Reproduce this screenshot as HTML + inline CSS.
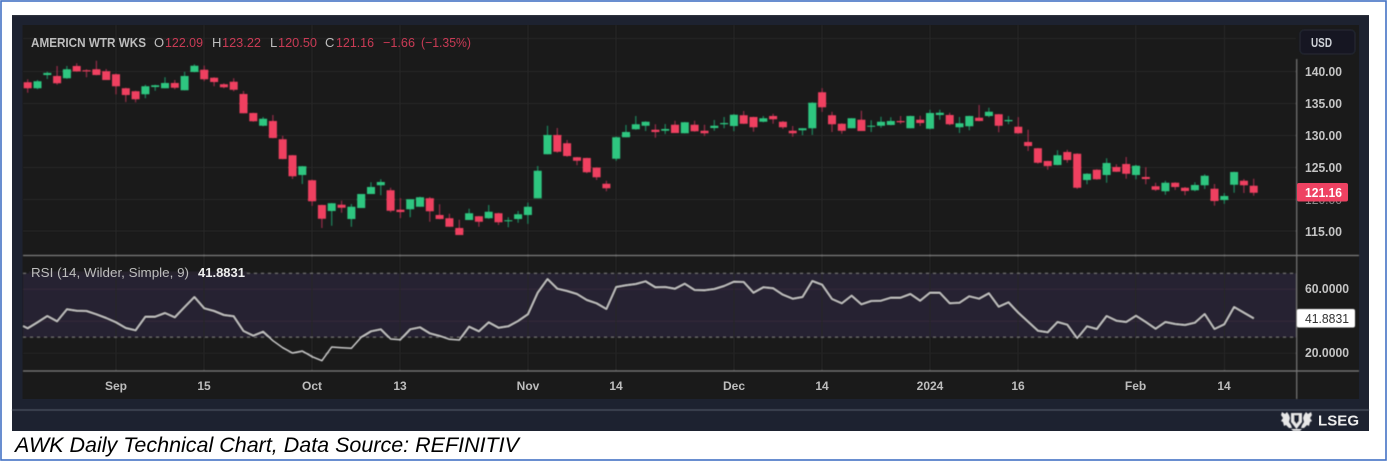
<!DOCTYPE html>
<html>
<head>
<meta charset="utf-8">
<title>AWK Daily Technical Chart</title>
<style>
html,body{margin:0;padding:0;background:#fff;width:1388px;height:462px;overflow:hidden}
svg{display:block}
text{font-family:"Liberation Sans",sans-serif}
</style>
</head>
<body>
<svg width="1388" height="462" viewBox="0 0 1388 462" xmlns="http://www.w3.org/2000/svg">
<defs>
<filter id="b" x="-2%" y="-2%" width="104%" height="104%"><feGaussianBlur stdDeviation="0.4"/></filter>
<filter id="t" x="-5%" y="-20%" width="110%" height="140%"><feGaussianBlur stdDeviation="0.35"/></filter>
</defs>
<rect width="1388" height="462" fill="#fff"/>
<rect x="1" y="1" width="1385" height="459" fill="none" stroke="#4472c4" stroke-width="1.6"/>

<rect x="12" y="15" width="1357" height="416" fill="#1d2230"/>
<rect x="12" y="15" width="1357" height="1.2" fill="#2c313c"/>
<rect x="22.5" y="25" width="1336.5" height="374" fill="#1a1a1a"/>

<g filter="url(#b)">
<rect x="23" y="273.3" width="1273.5" height="64" fill="#282230"/>
<path d="M23 38.5H1296M23 71.5H1296M23 103.5H1296M23 135.5H1296M23 167.5H1296M23 199.5H1296M23 231H1296" stroke="#262626" fill="none"/>
<path d="M23 289.2H1296M23 321.3H1296" stroke="#352f3d" fill="none"/>
<path d="M23 353.3H1296" stroke="#262626" fill="none"/>
<path d="M116 25V371M204 25V371M312 25V371M400 25V371M528 25V371M616 25V371M734 25V371M822 25V371M930 25V371M1018 25V371M1135.6 25V371M1224.5 25V371" stroke="#282828" fill="none"/>
<path d="M23 273.3H1296M23 337.3H1296" stroke="#7a7a7a" stroke-dasharray="3 4" fill="none"/>
<path d="M23 255.5H1359M23 371H1359" stroke="#7d7d7d" stroke-width="1.2" fill="none"/>
<path d="M1296.7 59V399" stroke="#777" stroke-width="1.2" fill="none"/>
<path d="M12 410H1369" stroke="#59606e" fill="none"/>

<path fill="none" stroke="#1f7d58" stroke-width="1.3" d="M37.5 80V89.3M47.3 71.7V79M66.9 66V78.7M145.4 84.7V98.3M155.2 84.7V90.7M165 77.3V88.3M184.6 72V90.3M194.4 64.3V72.3M263.1 117V126.3M302.3 166V184M331.7 203V225.7M351.4 204V226.7M361.2 194V208M371 182.3V194M380.8 179.3V195.3M410.2 199.3V217.3M420 196.7V206.7M469.1 208.7V220M488.7 205V218.7M508.3 217.3V227.3M518.1 211V222.7M527.9 202.7V223.7M537.7 166V198.3M547.5 125.7V154.3M616.2 136.7V160.7M626 125V137.3M635.8 116V129.7M645.6 121.3V131M665.2 124V134M684.8 122V133.3M714.3 120V130.7M724.1 117V128.3M733.9 114.3V131M763.3 116V122.3M802.5 128.3V135M812.3 102.3V134.7M851.6 118.3V128.3M871.2 120.3V132M881 116.7V127.7M890.8 117.3V125.3M910.4 115.7V128.3M930 110V128.7M939.8 109.7V119.7M959.5 117V133M969.3 115.7V130.3M988.9 107.7V117.3M1008.5 116V124.3M1057.5 150.3V165.3M1087 173.3V184.3M1106.6 158.3V182.7M1136 165V179.3M1165.4 180.7V194.7M1194.9 182.3V191.3M1204.7 174.3V189M1224.3 193.3V203.7M1234.1 171.7V192.7"/>
<path fill="none" stroke="#8c2c44" stroke-width="1.3" d="M27.7 79.3V92.7M57.1 66V84.7M76.7 63.3V71.7M86.5 69.3V77.3M96.4 60.7V75.3M106.2 69V80M116 74V94.3M125.8 87.7V102M135.6 90.7V102.3M174.8 80V89.3M204.2 65.7V81M214.1 77.3V86.3M223.9 83.3V88.3M233.7 78.3V91.3M243.5 91V113.3M253.3 112.7V121.7M272.9 115V138.3M282.7 136V159.3M292.5 155V179M312.1 180V205.7M321.9 204.7V228M341.6 200.7V212.7M390.6 187.7V212.3M400.4 198.3V218M429.8 197V221.7M439.6 204.3V219.3M449.4 213.7V226.7M459.3 219.7V235M478.9 216V226.7M498.5 212.7V225M557.3 128V152.7M567.1 140V156.7M577 157V165.3M586.8 157.7V173.3M596.6 167.3V180M606.4 180.7V191.3M655.4 124.3V137.7M675 120.7V133M694.6 120.7V131.7M704.5 124.7V136M743.7 111V124M753.5 116.7V131.7M773.1 113.7V123.7M782.9 121V129M792.7 126V136.7M822.1 88.3V111.7M832 111.7V132M841.8 123.3V133.7M861.4 110.7V131M900.6 116V124M920.2 115.7V126M949.7 112.7V125.3M979.1 105V121.3M998.7 114V132.3M1018.3 117.3V133.3M1028.1 129.7V151M1037.9 148V163.7M1047.7 160.7V169.7M1067.3 149.7V162.7M1077.2 153.3V189M1096.8 169.3V179.7M1116.4 164.3V172M1126.2 157V178.7M1145.8 167.3V184.3M1155.6 182.7V191M1175.2 182.3V190M1185 187V195.3M1214.5 184V205.7M1243.9 179V193M1253.7 178.7V195.7"/>
<path fill="none" stroke="#2dc680" stroke-width="8" d="M37.5 81.3V88.3M47.3 73V75M66.9 69.3V78.3M145.4 86.3V94.3M155.2 85.3V87M165 83V88.3M184.6 76V90.3M194.4 65.7V72M263.1 118.7V125.7M302.3 166.3V175M331.7 203.3V211M351.4 206.7V219M361.2 194V208M371 187V194M380.8 182V185.3M410.2 199.3V209.3M420 197.3V206.7M469.1 213.3V220M488.7 211.7V218.3M508.3 220.3V221.3M518.1 214.3V219M527.9 206.7V215M537.7 170.7V198.3M547.5 135V154.3M616.2 137.3V158.7M626 132V137.3M635.8 124.3V129.3M645.6 121.7V125.7M665.2 129V130.7M684.8 122.3V133.3M714.3 125.7V128M724.1 123V124.3M733.9 114.7V126M763.3 118.3V121.7M802.5 128.3V130.3M812.3 102.7V128.3M851.6 118.3V128.3M871.2 125.7V126.7M881 121.7V125.7M890.8 121V125M910.4 116V128.3M930 113V128.7M939.8 112.7V115M959.5 123.3V127.3M969.3 116V126.3M988.9 111.7V116M1008.5 120V121.3M1057.5 155.3V165M1087 173.7V180M1106.6 163V175M1136 165.7V175M1165.4 182.7V191.3M1194.9 185V190.3M1204.7 175.7V185.3M1224.3 196V200M1234.1 172V184.7"/>
<path fill="none" stroke="#ef4161" stroke-width="8" d="M27.7 82.3V88.3M57.1 76V83.3M76.7 66V71.3M86.5 70.3V71.3M96.4 69.3V75M106.2 71.3V80M116 74.3V86.3M125.8 88.3V95M135.6 91.3V99.3M174.8 83V87.7M204.2 69.7V79.3M214.1 77.7V82M223.9 84.3V87.3M233.7 81.7V89.7M243.5 94V113.3M253.3 113V121.3M272.9 121V138M282.7 139.3V159M292.5 155.3V176.3M312.1 180.3V201.3M321.9 205V218.7M341.6 204.7V207.7M390.6 190.3V210.7M400.4 209.7V212M429.8 198.3V211.3M439.6 215V219M449.4 218.3V226.7M459.3 228V235M478.9 216.3V221.7M498.5 213.3V222.3M557.3 135V151.7M567.1 143.3V156M577 157.3V160.7M586.8 158V172.3M596.6 167.7V177.3M606.4 183.7V188.3M655.4 129.7V132M675 124.7V133M694.6 124.7V131.3M704.5 130.7V133.3M743.7 115.3V123.7M753.5 117V127.3M773.1 116V119.3M782.9 121.7V127.3M792.7 130.7V133.3M822.1 92.3V107.3M832 115.3V124.3M841.8 123.7V130.7M861.4 119.7V131M900.6 121V122.3M920.2 119.7V123M949.7 115V124.3M979.1 117.7V121M998.7 114.3V125.7M1018.3 126.7V133.3M1028.1 142V146M1037.9 148.3V162.7M1047.7 161V166M1067.3 152V160M1077.2 153.7V187.7M1096.8 169.7V179.3M1116.4 167V171.7M1126.2 164V173.7M1145.8 177V179M1155.6 186.3V189.7M1175.2 182.7V187M1185 187.7V191M1214.5 188.7V201M1243.9 180.7V185.3M1253.7 185.7V192.7"/>

<polyline fill="none" stroke="#c9c9c9" stroke-width="1.5" stroke-linejoin="round" points="23,326 27.7,328.3 37.5,322.3 47.3,316 57.1,321.3 66.9,309.3 76.7,310.7 86.5,311 96.4,314.3 106.2,318 116,322.3 125.8,328 135.6,330.3 145.4,316.7 155.2,316.7 165,313 174.8,317.3 184.6,307 194.4,297 204.2,308.3 214.1,311 223.9,315 233.7,316.3 243.5,331 253.3,335.7 263.1,331.7 272.9,340.7 282.7,347.7 292.5,353 302.3,351 312.1,356.7 321.9,360.7 331.7,347 341.6,347.7 351.4,348.3 361.2,337.3 371,331.3 380.8,329.3 390.6,339 400.4,339.7 410.2,329.3 420,327.3 429.8,333.3 439.6,336 449.4,339.3 459.3,340 469.1,326.7 478.9,331.3 488.7,322.3 498.5,327.7 508.3,326.3 518.1,321 527.9,314.3 537.7,292.7 547.5,279 557.3,288.7 567.1,291 577,294 586.8,300 596.6,303.3 606.4,309 616.2,287 626,285.3 635.8,284 645.6,281.3 655.4,287.3 665.2,287 675,288.7 684.8,283.7 694.6,290 704.5,290.3 714.3,289 724.1,286 733.9,281.7 743.7,282 753.5,292.7 763.3,287.3 773.1,288.3 782.9,294.7 792.7,298.7 802.5,297 812.3,281 822.1,284.7 832,299 841.8,303.3 851.6,295.7 861.4,304.3 871.2,301 881,300.7 890.8,297.7 900.6,297.7 910.4,294 920.2,300.7 930,292.7 939.8,292.7 949.7,303.3 959.5,302.7 969.3,296.3 979.1,298.7 988.9,293.3 998.7,306.7 1008.5,302.3 1018.3,312.7 1028.1,321.7 1037.9,330.7 1047.7,332.3 1057.5,322 1067.3,324.7 1077.2,338.3 1087,326.3 1096.8,329 1106.6,316 1116.4,320.7 1126.2,322 1136,315.7 1145.8,322 1155.6,328.7 1165.4,322 1175.2,324 1185,325 1194.9,322.7 1204.7,314 1214.5,329 1224.3,324.3 1234.1,307 1243.9,312.7 1253.7,318.3"/>

<rect x="1300" y="30" width="55" height="24" rx="4" fill="#131722" stroke="#252b38"/>
<rect x="1297" y="309" width="58" height="18.5" rx="2" fill="#fff"/>
<rect x="29" y="271.5" width="218" height="3.5" fill="#28232f"/>
</g>

<g filter="url(#t)" font-size="13" fill="#c8c8c8">
<text x="31" y="47" textLength="115" lengthAdjust="spacingAndGlyphs" font-weight="bold" fill="#bdbdbd">AMERICN WTR WKS</text>
<text x="154" y="47" fill="#bdbdbd">O</text>
<text x="165" y="47" textLength="38" lengthAdjust="spacingAndGlyphs" fill="#c93a55">122.09</text>
<text x="212" y="47" fill="#bdbdbd">H</text>
<text x="222" y="47" textLength="39" lengthAdjust="spacingAndGlyphs" fill="#c93a55">123.22</text>
<text x="270" y="47" fill="#bdbdbd">L</text>
<text x="278" y="47" textLength="39" lengthAdjust="spacingAndGlyphs" fill="#c93a55">120.50</text>
<text x="325" y="47" fill="#bdbdbd">C</text>
<text x="336" y="47" textLength="38" lengthAdjust="spacingAndGlyphs" fill="#c93a55">121.16</text>
<text x="383" y="47" textLength="32" lengthAdjust="spacingAndGlyphs" fill="#c93a55">−1.66</text>
<text x="421" y="47" textLength="50" lengthAdjust="spacingAndGlyphs" fill="#c93a55">(−1.35%)</text>
<text x="1311" y="47" textLength="21" lengthAdjust="spacingAndGlyphs" font-weight="bold" fill="#cfd2d8">USD</text>

<g fill="#c4c4c4" font-weight="bold" font-size="12.500">
<text x="1305" y="76" textLength="37" lengthAdjust="spacingAndGlyphs">140.00</text>
<text x="1305" y="108" textLength="37" lengthAdjust="spacingAndGlyphs">135.00</text>
<text x="1305" y="140" textLength="37" lengthAdjust="spacingAndGlyphs">130.00</text>
<text x="1305" y="172" textLength="37" lengthAdjust="spacingAndGlyphs">125.00</text>
<text x="1305" y="236" textLength="37" lengthAdjust="spacingAndGlyphs">115.00</text>
<text x="1305" y="293" textLength="44" lengthAdjust="spacingAndGlyphs">60.0000</text>
<text x="1305" y="357" textLength="44" lengthAdjust="spacingAndGlyphs">20.0000</text>
</g>
<text x="1305" y="204" textLength="37" lengthAdjust="spacingAndGlyphs" fill="#8a8a8a">120.00</text>
<rect x="1297" y="183" width="51" height="18.5" rx="2" fill="#ee4362"/>
<text x="1305" y="197" textLength="37" lengthAdjust="spacingAndGlyphs" font-weight="bold" fill="#fff">121.16</text>
<text x="1305" y="323" textLength="44" lengthAdjust="spacingAndGlyphs" fill="#333">41.8831</text>

<text x="31" y="277" textLength="158" lengthAdjust="spacingAndGlyphs" fill="#bdbdbd">RSI (14, Wilder, Simple, 9)</text>
<text x="198" y="277" textLength="47" lengthAdjust="spacingAndGlyphs" font-weight="bold" fill="#eee">41.8831</text>

<g text-anchor="middle" fill="#bdbdbd" font-weight="bold" font-size="12">
<text x="116" y="390">Sep</text>
<text x="204" y="390">15</text>
<text x="312" y="390">Oct</text>
<text x="400" y="390">13</text>
<text x="528" y="390">Nov</text>
<text x="616" y="390">14</text>
<text x="734" y="390">Dec</text>
<text x="822" y="390">14</text>
<text x="930" y="390">2024</text>
<text x="1018" y="390">16</text>
<text x="1135.6" y="390">Feb</text>
<text x="1224" y="390">14</text>
</g>
</g>

<g filter="url(#b)" fill="#e8e8e8">
<path d="M1282 412l3 2 2-2 2 3 1 3-1 4 2 3 1 3h-3l-3-3-2 1-1-4-2-1 2-3-2-3z"/>
<path d="M1311 412l-3 2-2-2-2 3-1 3 1 4-2 3-1 3h3l3-3 2 1 1-4 2-1-2-3 2-3z"/>
<path d="M1291 413h11v9l-5.500 7-5.500-7z"/>
<path d="M1294 415h5v6l-2.500 3-2.500-3z" fill="#1d2230"/>
<path d="M1291 429h11l-2 2h-7z"/>
</g>
<text x="1318" y="425.500" font-size="15" font-weight="bold" fill="#ececec" textLength="41" lengthAdjust="spacing" filter="url(#t)">LSEG</text>

<text x="15" y="452" font-size="21" font-style="italic" fill="#000" textLength="504" lengthAdjust="spacingAndGlyphs">AWK Daily Technical Chart, Data Source: REFINITIV</text>
</svg>
</body>
</html>
